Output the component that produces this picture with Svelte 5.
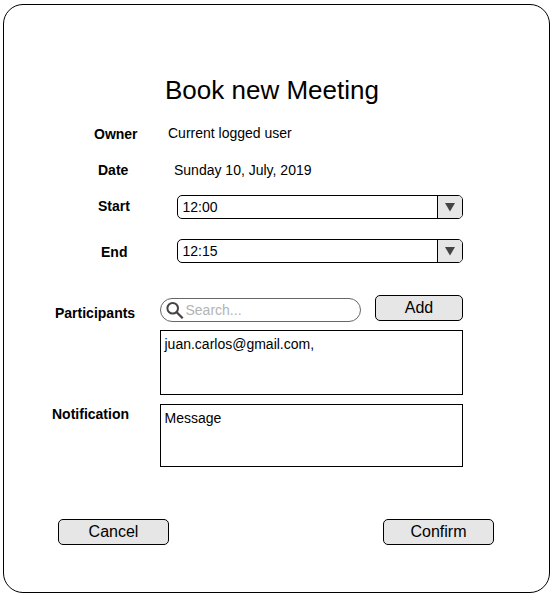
<script>
  let start = $state('12:00');
  let end = $state('12:15');
</script>

{#snippet timeSelect(value)}
  <div class="select">
    <span class="value">{value}</span>
    <span class="arrow">
      <svg width="25" height="22" viewBox="0 0 25 22"><path d="M7 7H17L12 15.5Z" fill="#444" /></svg>
    </span>
  </div>
{/snippet}

<main class="card">
  <h1>Book new Meeting</h1>
  <div class="row owner">
    <span class="label">Owner</span>
    <span class="text">Current logged user</span>
  </div>
  <div class="row date">
    <span class="label">Date</span>
    <span class="text">Sunday 10, July, 2019</span>
  </div>
  <div class="row start">
    <span class="label">Start</span>
    {@render timeSelect(start)}
  </div>
  <div class="row end">
    <span class="label">End</span>
    {@render timeSelect(end)}
  </div>
  <div class="row participants">
    <span class="label">Participants</span>
    <div class="field">
      <div class="finder">
        <div class="search">
          <svg width="20" height="20" viewBox="0 0 20 20" fill="none" stroke="#444">
            <circle cx="6.7" cy="6.3" r="5.3" stroke-width="2" />
            <path d="M10.4 10L16.7 16.3" stroke-width="2.3" />
          </svg>
          <span>Search...</span>
        </div>
        <button class="add">Add</button>
      </div>
      <div class="box people">juan.carlos@gmail.com,</div>
    </div>
  </div>
  <div class="row notification">
    <span class="label">Notification</span>
    <div class="box message">Message</div>
  </div>
  <div class="actions">
    <button>Cancel</button>
    <button>Confirm</button>
  </div>
</main>

<style>
  :global(body) {
    background: #fff;
  }
  .card,
  .card * {
    box-sizing: border-box;
  }
  .card {
    width: 547px;
    height: 589px;
    margin: 4px 0 0 3px;
    padding-top: 70px;
    border: 1px solid #000;
    border-radius: 20px;
    display: flex;
    flex-direction: column;
    font: 14px/16px 'Liberation Sans', Arial, sans-serif;
    color: #000;
    white-space: nowrap;
  }
  h1 {
    margin: 0 0 20px 161px;
    font-size: 26px;
    line-height: 30px;
    font-weight: 400;
  }
  .row {
    display: flex;
    align-items: flex-start;
    flex: none;
  }
  .label {
    font-weight: 700;
    flex: none;
  }
  .owner {
    height: 37px;
    padding-left: 90px;
  }
  .owner .label {
    width: 74px;
    padding-top: 1px;
  }
  .date {
    height: 33px;
    padding-left: 94px;
  }
  .date .label {
    width: 76px;
  }
  .start {
    height: 44px;
    padding-left: 94px;
  }
  .start .label {
    width: 79px;
    padding-top: 3px;
  }
  .end {
    height: 56px;
    padding-left: 97px;
  }
  .end .label {
    width: 76px;
    padding-top: 5px;
  }
  .participants {
    height: 109px;
    padding-left: 51px;
  }
  .participants .label {
    width: 105px;
    padding-top: 10px;
  }
  .notification {
    height: 115px;
    padding-left: 48px;
  }
  .notification .label {
    width: 108px;
    padding-top: 2px;
  }
  .select {
    display: flex;
    width: 286px;
    height: 24px;
    border: 1px solid #000;
    border-radius: 5px;
    overflow: hidden;
  }
  .value {
    flex: 1;
    padding: 3px 0 0 4.5px;
  }
  .arrow {
    width: 25px;
    border-left: 1px solid #000;
    background: #e6e6e6;
  }
  .arrow svg,
  .search svg {
    display: block;
  }
  .finder {
    display: flex;
    width: 303px;
    height: 35px;
    justify-content: space-between;
  }
  .search {
    display: flex;
    width: 201px;
    height: 24px;
    margin-top: 3px;
    padding: 3px 0 0 5px;
    border: 1px solid #666;
    border-radius: 12px;
    color: #b3b3b3;
  }
  .search span {
    margin-left: -0.5px;
  }
  button {
    width: 111px;
    height: 26px;
    padding: 0 0 1px;
    border: 1px solid #000;
    border-radius: 5px;
    background: #e6e6e6;
    color: #000;
    font: 16px/18px 'Liberation Sans', Arial, sans-serif;
  }
  .add {
    width: 88px;
  }
  .box {
    width: 303px;
    border: 1px solid #000;
    padding: 5px 3.5px;
  }
  .people {
    height: 65px;
  }
  .message {
    height: 63px;
  }
  .actions {
    display: flex;
    justify-content: space-between;
    width: 436px;
    margin-left: 54px;
  }
</style>
